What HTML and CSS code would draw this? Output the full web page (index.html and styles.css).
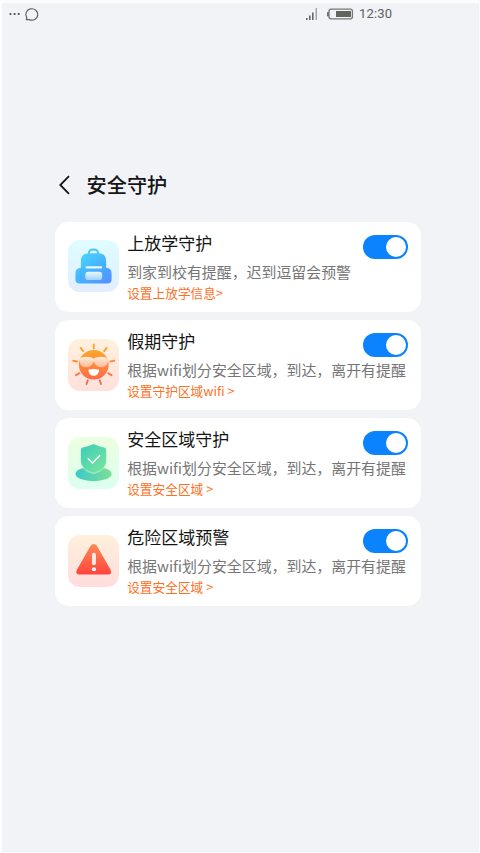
FILE: index.html
```html
<!DOCTYPE html>
<html lang="zh-CN">
<head>
<meta charset="utf-8">
<title>安全守护</title>
<link rel="stylesheet" href="styles.css">
</head>
<body>
<div class="screen">
  <header class="status">
    <svg class="status-left" width="32" height="18" viewBox="0 0 32 18">
      <g fill="#484848"><circle cx="2.5" cy="9" r="1.1"/><circle cx="6.6" cy="9" r="1.1"/><circle cx="10.7" cy="9" r="1.1"/></g>
      <path d="M18.3 14.6 L18.8 12.6 A6 5.7 0 1 1 21.2 14.6 Z" fill="none" stroke="#606060" stroke-width="1.2" stroke-linejoin="round"/>
    </svg>
    <svg class="status-right" width="50" height="18" viewBox="0 0 50 18">
      <g fill="#666"><rect x="1" y="13" width="1.6" height="2"/><rect x="4" y="10.5" width="1.6" height="4.5"/><rect x="7" y="7.5" width="1.6" height="7.5"/><rect x="10.6" y="3" width="1.3" height="12" fill="#999"/></g>
      <rect x="24" y="4.2" width="23.4" height="9.6" rx="2" fill="none" stroke="#777772" stroke-width="1.3"/>
      <rect x="22" y="7" width="1.8" height="4.4" rx=".6" fill="#6b6b66"/>
      <rect x="31" y="6" width="15" height="6" fill="#64645f"/>
    </svg>
    <span class="time">12:30</span>
  </header>
  <main class="content">
    <div class="heading">
      <svg width="14" height="22" viewBox="0 0 14 22"><path d="M11 2.2 L2.3 11 L11 19.8" fill="none" stroke="#151515" stroke-width="1.8"/></svg>
      <h1>安全守护</h1>
    </div>
    <section class="card">
      <div class="tile tile-blue">
        <svg viewBox="0 0 52 52">
          <defs><linearGradient id="bag" x1="0" y1="0" x2=".9" y2="1"><stop offset="0" stop-color="#4fdcff"/><stop offset=".5" stop-color="#46b5ff"/><stop offset="1" stop-color="#5590ff"/></linearGradient>
          <linearGradient id="pocket" x1="0" y1="0" x2="0" y2="1"><stop offset="0" stop-color="#e8faff"/><stop offset="1" stop-color="#9fd0ff"/></linearGradient></defs>
          <path d="M21 15 V13.5 C21 8.2 30.5 8.2 30.5 13.5 V15" fill="none" stroke="#48c5fb" stroke-width="2"/>
          <path d="M13 28 V21 Q13 13.5 21 13.5 H30.5 Q38.5 13.5 38.5 21 V28 Q44 28.5 44 33.5 V40 Q44 44 39.5 44 H12 Q7.5 44 7.5 40 V33.5 Q7.5 28.5 13 28 Z" fill="url(#bag)"/>
          <path d="M13 29 V42 M38.5 29 V42" stroke="#4599f5" stroke-width=".8" opacity=".45"/>
          <rect x="17.7" y="26.5" width="16.8" height="2.2" rx="1.1" fill="#e9faff"/>
          <rect x="17.5" y="32" width="17" height="8.5" rx="3.2" fill="url(#pocket)"/>
        </svg>
      </div>
      <div class="copy"><h2>上放学守护</h2><p>到家到校有提醒，迟到逗留会预警</p><a>设置上放学信息&gt;</a></div>
      <span class="switch"></span>
    </section>
    <section class="card">
      <div class="tile tile-low tile-sun">
        <svg viewBox="0 0 52 52">
          <defs><linearGradient id="sun" x1="0" y1="0" x2="0" y2="1"><stop offset="0" stop-color="#ffa62d"/><stop offset="1" stop-color="#ff6a4a"/></linearGradient>
          <linearGradient id="glass" x1="0" y1="0" x2="0" y2="1"><stop offset="0" stop-color="#fff0d9"/><stop offset="1" stop-color="#ffb796"/></linearGradient></defs>
          <g stroke-width="1.9" stroke-linecap="round"><path d="M26 5.5 V9.5 M12.8 9 L15.3 12.3 M39 9 L36.5 12.3" stroke="#ffa02c"/><path d="M5.3 22 L9.2 22.7 M46.7 22 L42.8 22.7" stroke="#ff8c3b"/><path d="M8 36.5 L11.5 34.5 M44 36.5 L40.5 34.5" stroke="#ff7745"/><path d="M18.7 45.5 L20 41.7 M33.3 45.5 L32 41.7" stroke="#ff6650"/></g>
          <circle cx="26" cy="26" r="15" fill="url(#sun)"/>
          <path d="M11.8 19.8 Q16 16.5 24 18.8 Q26 20.5 28 18.8 Q36 16.5 40.2 19.8 Q41.3 28.6 33.8 28.6 Q28 28.6 26 22.8 Q24 28.6 18.2 28.6 Q10.7 28.6 11.8 19.8 Z" fill="url(#glass)"/>
          <path d="M20.5 31 Q26 29.8 31.5 31 Q30.9 37.2 26 37.2 Q21.1 37.2 20.5 31 Z" fill="#fff"/>
        </svg>
      </div>
      <div class="copy"><h2>假期守护</h2><p>根据wifi划分安全区域，到达，离开有提醒</p><a>设置守护区域wifi &gt;</a></div>
      <span class="switch"></span>
    </section>
    <section class="card">
      <div class="tile tile-low tile-green">
        <svg viewBox="0 0 52 52">
          <defs><linearGradient id="shield" x1="0" y1="0" x2=".9" y2="1"><stop offset="0" stop-color="#3bcdbc"/><stop offset="1" stop-color="#78e59b"/></linearGradient>
          <linearGradient id="base" x1="0" y1="0" x2="1" y2="0"><stop offset="0" stop-color="#3bc9c8"/><stop offset="1" stop-color="#7be096"/></linearGradient></defs>
          <ellipse cx="25.8" cy="37.3" rx="18.2" ry="7.3" fill="url(#base)"/>
          <path d="M13 14.5 Q13 12.3 15 12 Q20.5 11 24.3 8.6 Q25.8 7.8 27.3 8.6 Q31 11 36.6 12 Q38.6 12.3 38.6 14.5 V25.5 Q38.6 33.5 27.5 37.2 Q25.8 37.8 24.1 37.2 Q13 33.5 13 25.5 Z" fill="#b5f0c6" opacity=".65"/>
          <path d="M13 13 Q13 10.8 15 10.5 Q20.5 9.8 24.3 7.6 Q25.8 6.8 27.3 7.6 Q31 9.8 36.6 10.5 Q38.6 10.8 38.6 13 V24 Q38.6 32 27.5 35.4 Q25.8 36 24.1 35.4 Q13 32 13 24 Z" fill="url(#shield)"/>
          <path d="M20 21.4 L24.7 26.3 L32.4 18.4" fill="none" stroke="#fff" stroke-width="1.4"/>
        </svg>
      </div>
      <div class="copy"><h2>安全区域守护</h2><p>根据wifi划分安全区域，到达，离开有提醒</p><a>设置安全区域 &gt;</a></div>
      <span class="switch"></span>
    </section>
    <section class="card">
      <div class="tile tile-low tile-red">
        <svg viewBox="0 0 52 52">
          <defs><linearGradient id="warn" x1="0" y1="0" x2="0" y2="1"><stop offset="0" stop-color="#ff8a55"/><stop offset="1" stop-color="#ff453f"/></linearGradient></defs>
          <path d="M22.7 11.2 Q26 6.8 29.3 11.2 L43 35 Q45 39.8 40.5 39.8 H11.5 Q7 39.8 9 35 Z" fill="url(#warn)"/>
          <rect x="24.2" y="18" width="4" height="12.4" rx="1.7" fill="#ffebe2"/><circle cx="26.2" cy="34.6" r="2.1" fill="#fff"/>
        </svg>
      </div>
      <div class="copy"><h2>危险区域预警</h2><p>根据wifi划分安全区域，到达，离开有提醒</p><a>设置安全区域 &gt;</a></div>
      <span class="switch"></span>
    </section>
  </main>
</div>
</body>
</html>
```
FILE: styles.css
```css
* { box-sizing: border-box; margin: 0; }
body { background: #fcfcfd; font-family: "Noto Sans CJK SC", sans-serif; }
.screen { height: 853px; border: solid #fcfcfd; border-width: 3px 1px 1px 2px; background: #f1f3f7; }
.status { height: 21px; display: flex; align-items: center; padding-left: 6px; }
.status-left { margin-right: 265px; }
.status-right { flex: none; }
.time { font: 13px/20px Roboto, sans-serif; color: #606060; margin-left: 4px; letter-spacing: .15px; }
.content { width: 366px; margin: 143px 0 0 52.5px; display: flex; flex-direction: column; }
.heading { height: 36px; display: flex; align-items: center; gap: 15px; padding-left: 3px; margin-bottom: 19px; }
.heading h1 { font-size: 20.2px; line-height: 36px; font-weight: 500; color: #151515; }
.card { height: 89.5px; margin-bottom: 8.5px; border-radius: 14px; background: #fff; display: flex; padding: 0 13px; position: relative; }
.tile { flex: none; width: 51.5px; height: 51.5px; margin: 18px 8.2px 0 0; border-radius: 12px; }
.tile-low { margin-top: 19px; }
.tile svg { display: block; width: 51.5px; height: 51.5px; }
.tile-blue { background: linear-gradient(#defdff, #e3edff); }
.tile-sun { background: linear-gradient(#fff1dd, #ffe0dc); }
.tile-green { background: linear-gradient(#edffdf, #dcffef); }
.tile-red { background: linear-gradient(#fff0dc, #ffdddd); }
.copy { flex: none; white-space: nowrap; padding-top: 8px; }
.copy h2 { font-size: 17px; line-height: 26px; font-weight: 400; color: #151515; }
.copy p { font-size: 14.93px; line-height: 31px; color: #767676; }
.copy a { display: block; font-size: 12.7px; line-height: 11px; color: #ff701e; }
.switch { position: absolute; top: 12.5px; right: 13px; width: 45px; height: 24px; border-radius: 12px; background: #0b82fe; }
.switch::after { content: ""; position: absolute; top: 2px; right: 2px; width: 20px; height: 20px; border-radius: 50%; background: #fff; }
```
